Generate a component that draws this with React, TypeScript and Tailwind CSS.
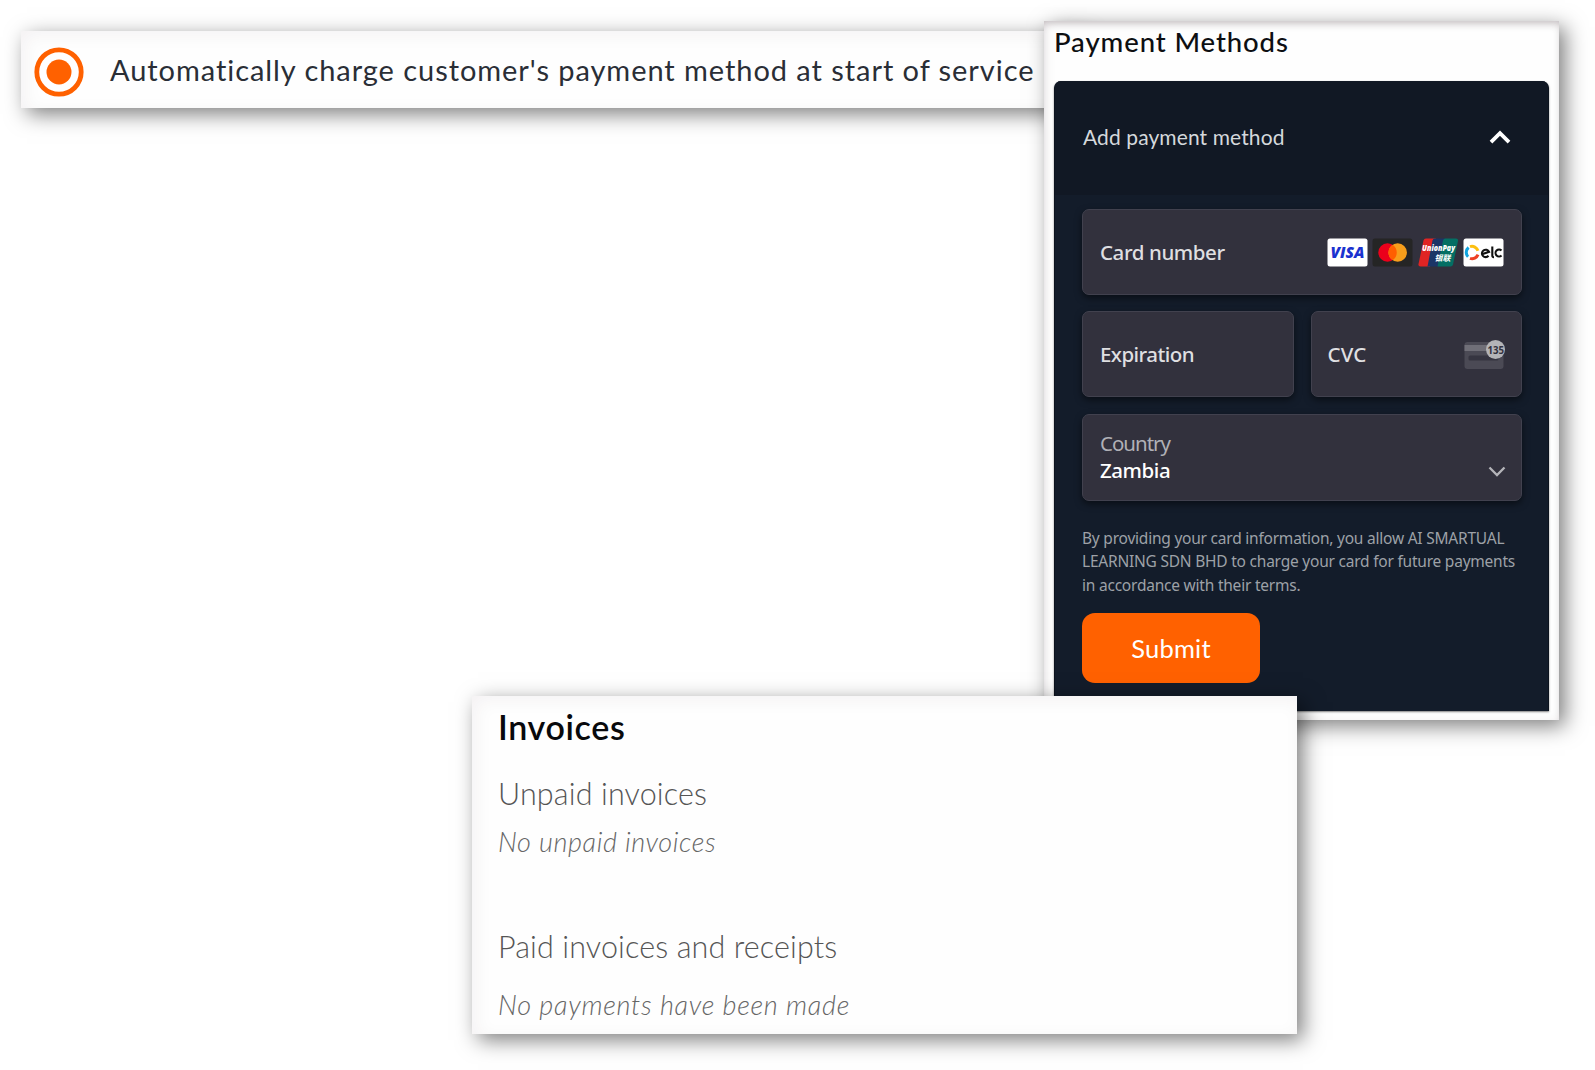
import type { ReactNode } from 'react';

const lato = "font-['Lato','Open_Sans',sans-serif]";
const noto = "font-['Noto_Sans','Open_Sans',sans-serif]";

function Field({ children, className = '' }: { children: ReactNode; className?: string }) {
  return (
    <div
      className={`flex items-center rounded-[7px] border border-[#41414e] bg-[#32313d] shadow-[0_3px_7px_rgba(0,0,0,0.5)] ${className}`}
    >
      {children}
    </div>
  );
}

function VisaIcon() {
  return (
    <svg width="41" height="29" viewBox="0 0 41 29" className="shrink-0">
      <rect x="0.5" y="0.5" width="40" height="28" rx="2.5" fill="#fff" />
      <text x="3.5" y="20" fontFamily="Open Sans" fontSize="15.500" fontWeight="800" fontStyle="italic" fill="#1a32cf" textLength="34" lengthAdjust="spacingAndGlyphs">
        VISA
      </text>
    </svg>
  );
}

function MastercardIcon() {
  return (
    <svg width="41" height="29" viewBox="0 0 41 29" className="shrink-0">
      <rect x="0.5" y="0.5" width="40" height="28" rx="2.5" fill="#252525" />
      <circle cx="15.5" cy="14.5" r="9.2" fill="#eb001b" />
      <circle cx="25.7" cy="14.5" r="9.2" fill="#f79e1b" />
      <path d="M20.6 6.8a9.2 9.2 0 0 1 0 15.4a9.2 9.2 0 0 1 0-15.4z" fill="#ff5f00" />
    </svg>
  );
}

function UnionPayIcon() {
  return (
    <svg width="41" height="29" viewBox="0 0 41 29" className="shrink-0 overflow-visible">
      <path d="M8 0.5H18L12 28.5H2.500Q0 28.500 0.500 26L5.500 2.500Q6 0.500 8 0.500z" fill="#e02424" />
      <path d="M17 .5H28L22 28.500H9.500L14.500 2.500Q15 .500 17 .500z" fill="#1b3567" />
      <path d="M27.500 .5H38Q40.500 .500 40 3L35 26.500Q34.500 28.500 32.500 28.500H19.500L25 2.500Q25.500 .500 27.500 .500z" fill="#046f64" />
      <text x="4" y="13" fontFamily="Open Sans" fontSize="8.500" fontWeight="800" fontStyle="italic" fill="#fff" textLength="33" lengthAdjust="spacingAndGlyphs">
        UnionPay
      </text>
      <text x="16.500" y="23" fontFamily="Noto Sans CJK SC" fontSize="8" fontWeight="700" fontStyle="italic" fill="#fff" textLength="16" lengthAdjust="spacingAndGlyphs">
        银联
      </text>
    </svg>
  );
}

function EloIcon() {
  return (
    <svg width="41" height="29" viewBox="0 0 41 29" className="shrink-0">
      <rect x="0.5" y="0.5" width="40" height="28" rx="2.5" fill="#fff" />
      <g fill="none" strokeWidth="3">
        <path d="M5.600 9.500A6.300 6.300 0 0 0 5.100 18.800" stroke="#12a5e0" />
        <path d="M7 8.700A6.300 6.300 0 0 1 15 12.800" stroke="#fdc010" />
        <path d="M7 20.300A6.300 6.300 0 0 0 15 16.600" stroke="#ee4023" />
      </g>
      <g fill="none" stroke="#111" strokeWidth="2.100">
        <path d="M19 16.200L26 13.800A3.700 3.700 0 1 0 25.500 17.800" />
        <path d="M29.300 8.500V17.500Q29.300 19.300 31 19.200" />
        <path d="M38.500 12.500A3.500 3.500 0 1 0 38.500 17.500" />
      </g>
    </svg>
  );
}

function CvcIcon() {
  return (
    <svg width="42" height="31" viewBox="0 0 42 31" className="shrink-0 overflow-visible">
      <rect x="0.500" y="3" width="39" height="27" rx="3" fill="#4b4a55" />
      <rect x="0.500" y="6" width="39" height="6" fill="#706f78" />
      <rect x="4.500" y="16.500" width="30" height="5" rx="1.500" fill="#363541" />
      <circle cx="31.500" cy="10.500" r="9.500" fill="#b4b4b7" />
      <text x="23.500" y="14.500" fontFamily="Open Sans" fontSize="10.500" fontWeight="700" fill="#33323e" textLength="16.500" lengthAdjust="spacingAndGlyphs">
        135
      </text>
    </svg>
  );
}

function ChargeOption() {
  return (
    <section className="absolute left-[21px] top-[31px] flex h-[77px] w-[1060px] items-center bg-[#fefefe] pl-[13px] shadow-[6px_6px_20px_rgba(0,0,0,0.51),inset_4px_4px_18px_rgba(60,20,30,0.05)]">
      <svg width="50" height="50" viewBox="0 0 50 50" className="mt-[5px] shrink-0">
        <circle cx="25" cy="25" r="22.200" fill="#fff" stroke="#ff6100" strokeWidth="4.800" />
        <circle cx="25" cy="25" r="12.500" fill="#ff6100" />
      </svg>
      <span className="ml-[26px] whitespace-nowrap text-[29px] leading-10 tracking-[0.94px] text-[#2a2e36]">
        Automatically charge customer's payment method at start of service
      </span>
    </section>
  );
}

function PaymentMethods() {
  return (
    <section className="absolute left-[1044px] top-[21px] h-[699px] w-[515px] bg-[#fefefe] px-[10px] shadow-[6px_6px_20px_rgba(0,0,0,0.51),inset_0_5px_9px_-3px_rgba(30,10,20,0.26),inset_3px_0_12px_rgba(60,20,30,0.05)]">
      <h2 className="h-[60px] whitespace-nowrap text-[27.500px] font-medium leading-[42px] tracking-[0.900px] text-[#0d0f12]">Payment Methods</h2>
      <div className="h-[630px] overflow-hidden rounded-t-[7px] border-x border-[#0c131e] bg-[#131c2a] shadow-[0_1px_2px_rgba(0,0,0,0.5)]">
        <div className="flex h-[114px] items-start justify-between bg-[#111824] pl-[28px] pr-[37px] pt-[42px]">
          <span className="whitespace-nowrap text-[21px] leading-7 tracking-[0.100px] text-[#d5d8dc]">Add payment method</span>
          <svg width="22" height="14" viewBox="0 0 22 14" className="mt-[7px]">
            <path d="M2 12.200L11 3.200L20 12.200" fill="none" stroke="#fff" strokeWidth="3.800" />
          </svg>
        </div>
        <div className={`flex flex-col pl-[27px] pr-[26px] pt-[14px] ${noto}`}>
          <Field className="h-[86px] justify-between pl-[17px] pr-[17px]">
            <span className="whitespace-nowrap text-[20.500px] font-medium tracking-[-0.420px] text-[#dfdfe1]">Card number</span>
            <div className="flex gap-[4.500px]">
              <VisaIcon />
              <MastercardIcon />
              <UnionPayIcon />
              <EloIcon />
            </div>
          </Field>
          <div className="mt-[16px] grid grid-cols-2 gap-[17px]">
            <Field className="h-[86px] pl-[17px]">
              <span className="text-[20.500px] font-medium tracking-[-0.550px] text-[#dfdfe1]">Expiration</span>
            </Field>
            <Field className="h-[86px] justify-between pl-[16px] pr-[15px]">
              <span className="text-[20.500px] font-medium tracking-[0.200px] text-[#dfdfe1]">CVC</span>
              <CvcIcon />
            </Field>
          </div>
          <Field className="mt-[17px] h-[87px] justify-between pl-[17px] pr-[15px]">
            <div className="-mt-[2px] flex flex-col text-[20.500px] leading-[27px]">
              <span className="tracking-[-1px] text-[#b0b0b6]">Country</span>
              <span className="font-medium tracking-[-0.450px] text-white">Zambia</span>
            </div>
            <svg width="18" height="11" viewBox="0 0 18 11" className="mt-[27px]">
              <path d="M1.500 1.500L9 9L16.500 1.500" fill="none" stroke="#b4b4b9" strokeWidth="2.300" />
            </svg>
          </Field>
          <p className="mt-[26px] whitespace-nowrap text-[15.500px] leading-[23.300px] tracking-[-0.220px] text-[#9da1a7]">
            By providing your card information, you allow AI SMARTUAL
            <br />
            LEARNING SDN BHD to charge your card for future payments
            <br />
            in accordance with their terms.
          </p>
          <button className={`mt-[16px] h-[70px] w-[178px] rounded-[13px] bg-[#ff6100] text-[25.500px] tracking-[0.200px] text-white ${lato}`}>Submit</button>
        </div>
      </div>
    </section>
  );
}

function Invoices() {
  return (
    <section className="absolute left-[472px] top-[696px] flex h-[338px] w-[825px] flex-col whitespace-nowrap bg-[#fefefe] pl-[26px] shadow-[6px_6px_20px_rgba(0,0,0,0.51),inset_4px_4px_18px_rgba(60,20,30,0.05)]">
      <h2 className="mt-[11px] text-[34px] font-semibold leading-10 tracking-[0.650px] text-[#08090c]">Invoices</h2>
      <h3 className="mt-[26px] text-[30.500px] font-light leading-10 tracking-[0.150px] text-[#555]">Unpaid invoices</h3>
      <p className="mt-[9px] text-[27px] font-light italic leading-10 tracking-[0.600px] text-[#666]">No unpaid invoices</p>
      <h3 className="mt-[64px] text-[30.500px] font-light leading-10 tracking-[0.120px] text-[#555]">Paid invoices and receipts</h3>
      <p className="mt-[19px] text-[27px] font-light italic leading-10 tracking-[0.720px] text-[#666]">No payments have been made</p>
    </section>
  );
}

export default function App() {
  return (
    <main className={`relative h-[1070px] w-[1595px] overflow-hidden bg-white ${lato}`}>
      <ChargeOption />
      <PaymentMethods />
      <Invoices />
    </main>
  );
}
